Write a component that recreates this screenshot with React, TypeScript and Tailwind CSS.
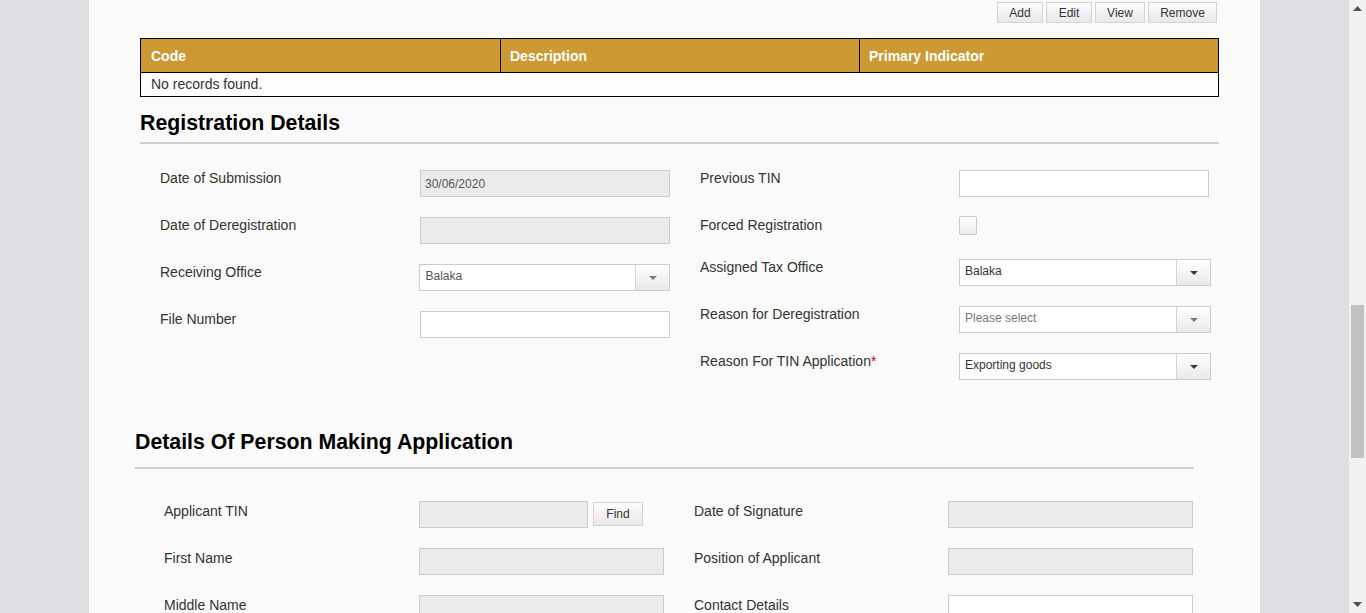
import React from 'react';

const font = { fontFamily: '"Liberation Sans", Arial, sans-serif' };

function TextInput({ disabled = false, value = '', w = 'w-[250px]' }: { disabled?: boolean; value?: string; w?: string }) {
  return (
    <div
      className={`${w} h-[27px] border border-[#cccccc] flex items-center px-[4px] text-[12px] text-[#555] ${
        disabled ? 'bg-[#ebebeb]' : 'bg-white'
      }`}
    >
      {value}
    </div>
  );
}

function Select({
  value,
  placeholder = false,
  light = false,
  w = 'w-[252px]',
}: {
  value: string;
  placeholder?: boolean;
  light?: boolean;
  w?: string;
}) {
  return (
    <div className={`${w} h-[27px] border border-[#cccccc] bg-white flex`}>
      <div
        className={`flex-1 flex items-center px-[5px] pb-[3px] text-[12px] ${
          placeholder ? 'text-[#777]' : light ? 'text-[#555]' : 'text-[#333]'
        }`}
      >
        {value}
      </div>
      <div className="w-[34px] border-l border-[#d5d5d5] bg-gradient-to-b from-white to-[#e9e9e9] flex items-center justify-center">
        <svg width="8" height="4" viewBox="0 0 8 4">
          <path d="M0 0H8L4 4Z" fill={placeholder || light ? '#7a7a7a' : '#3a3a3a'} />
        </svg>
      </div>
    </div>
  );
}

function Btn({ label, w }: { label: string; w: string }) {
  return (
    <div
      className={`${w} h-[21px] border border-[#d3d3d3] bg-gradient-to-b from-[#fdfdfd] to-[#e8e8e8] flex items-center justify-center text-[12px] text-[#333]`}
    >
      {label}
    </div>
  );
}

function Label({ children, className = '' }: { children: React.ReactNode; className?: string }) {
  return <div className={`text-[#333] leading-[16px] ${className}`}>{children}</div>;
}

export default function App() {
  return (
    <div className="flex h-[613px] overflow-hidden bg-[#dfdfe1]" style={font}>
      <div className="flex-1 flex justify-center">
        <div className="w-[1171px] bg-[#fafafa] pl-[51px] pr-[41px]">
          {/* Toolbar */}
          <div className="flex justify-end gap-[3px] pt-[2px] pr-[2px]">
            <Btn label="Add" w="w-[46px]" />
            <Btn label="Edit" w="w-[46px]" />
            <Btn label="View" w="w-[50px]" />
            <Btn label="Remove" w="w-[69px]" />
          </div>

          {/* Table */}
          <div className="mt-[15px] border border-black">
            <div className="grid grid-cols-3 h-[34px] bg-[#cc9933] border-b border-black text-white font-bold text-[14px]">
              <div className="flex items-center pl-[10px] pt-[1px]">Code</div>
              <div className="flex items-center pl-[9px] pt-[1px] border-l border-black">Description</div>
              <div className="flex items-center pl-[9px] pt-[1px] border-l border-black">Primary Indicator</div>
            </div>
            <div className="h-[23px] flex items-center pl-[10px] text-[14px] text-[#333] bg-[#fdfdfd]">
              No records found.
            </div>
          </div>

          {/* Registration Details */}
          <h2 className="mt-[14px] text-[21.3px] leading-[24px] font-bold text-black">Registration Details</h2>
          <div className="mt-[7px] h-[2px] bg-[#cfcfcf]" />

          <div className="mt-[26px] pl-[20px] flex gap-[30px] text-[14px]">
            <div className="w-[510px] flex flex-col">
              <div className="h-[47px] flex">
                <Label className="w-[260px]">Date of Submission</Label>
                <TextInput disabled value="30/06/2020" />
              </div>
              <div className="h-[47px] flex">
                <Label className="w-[260px]">Date of Deregistration</Label>
                <TextInput disabled />
              </div>
              <div className="h-[47px] flex">
                <Label className="w-[260px]">Receiving Office</Label>
                <Select value="Balaka" light w="w-[251px]" />
              </div>
              <div className="h-[47px] flex">
                <Label className="w-[260px]">File Number</Label>
                <TextInput />
              </div>
            </div>
            <div className="flex flex-col">
              <div className="h-[47px] flex">
                <Label className="w-[259px]">Previous TIN</Label>
                <TextInput />
              </div>
              <div className="h-[42px] flex">
                <Label className="w-[259px]">Forced Registration</Label>
                <div className="-mt-[1px] w-[18px] h-[19px] rounded-[2px] border border-[#cccccc] bg-gradient-to-b from-white to-[#ebebeb]" />
              </div>
              <div className="h-[47px] flex">
                <Label className="w-[259px]">Assigned Tax Office</Label>
                <Select value="Balaka" />
              </div>
              <div className="h-[47px] flex">
                <Label className="w-[259px]">Reason for Deregistration</Label>
                <Select value="Please select" placeholder />
              </div>
              <div className="h-[47px] flex">
                <Label className="w-[259px]">
                  Reason For TIN Application<span className="text-[#e0001b]">*</span>
                </Label>
                <Select value="Exporting goods" />
              </div>
            </div>
          </div>

          {/* Details Of Person Making Application */}
          <div className="-ml-[5px] w-[1059px]">
            <h2 className="mt-[30px] text-[21.3px] leading-[24px] font-bold text-black">
              Details Of Person Making Application
            </h2>
            <div className="mt-[13px] h-[2px] bg-[#cfcfcf]" />

            <div className="mt-[32px] pl-[29px] flex gap-[30px] text-[14px]">
              <div className="w-[500px] flex flex-col">
                <div className="h-[47px] flex">
                  <Label className="w-[255px] pt-[2px]">Applicant TIN</Label>
                  <TextInput disabled w="w-[169px]" />
                  <div className="ml-[5px] mt-[1px] w-[50px] h-[24px] border border-[#d3d3d3] bg-gradient-to-b from-[#fdfdfd] to-[#e8e8e8] flex items-center justify-center text-[12px] text-[#333]">
                    Find
                  </div>
                </div>
                <div className="h-[47px] flex">
                  <Label className="w-[255px] pt-[2px]">First Name</Label>
                  <TextInput disabled w="w-[245px]" />
                </div>
                <div className="h-[47px] flex">
                  <Label className="w-[255px] pt-[2px]">Middle Name</Label>
                  <TextInput disabled w="w-[245px]" />
                </div>
              </div>
              <div className="flex flex-col">
                <div className="h-[47px] flex">
                  <Label className="w-[254px] pt-[2px]">Date of Signature</Label>
                  <TextInput disabled w="w-[245px]" />
                </div>
                <div className="h-[47px] flex">
                  <Label className="w-[254px] pt-[2px]">Position of Applicant</Label>
                  <TextInput disabled w="w-[245px]" />
                </div>
                <div className="h-[47px] flex">
                  <Label className="w-[254px] pt-[2px]">Contact Details</Label>
                  <TextInput w="w-[245px]" />
                </div>
              </div>
            </div>
          </div>
        </div>
      </div>

      {/* Scrollbar */}
      <div className="w-[17px] bg-[#f1f1f1] flex flex-col items-center">
        <div className="h-[17px] flex items-center justify-center">
          <svg width="9" height="5" viewBox="0 0 9 5">
            <path d="M4.5 0L9 5H0Z" fill="#505050" />
          </svg>
        </div>
        <div className="flex-1 w-full flex flex-col items-center">
          <div className="mt-[288px] w-[13px] h-[153px] bg-[#c1c1c1]" />
        </div>
        <div className="h-[17px] flex items-center justify-center">
          <svg width="9" height="5" viewBox="0 0 9 5">
            <path d="M0 0H9L4.5 5Z" fill="#505050" />
          </svg>
        </div>
      </div>
    </div>
  );
}
